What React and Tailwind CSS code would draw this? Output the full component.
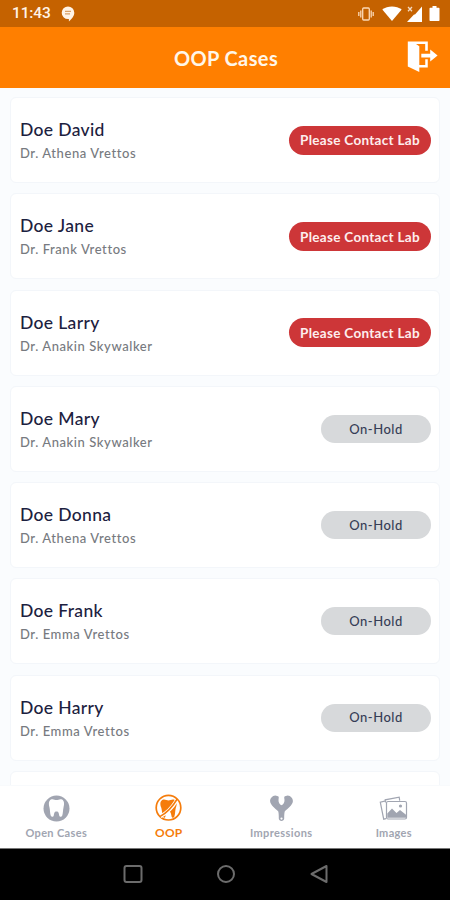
import React, { useState } from 'react'

const cases = [
    { id: 1, name: 'Doe David', doctor: 'Dr. Athena Vrettos', contact: true },
    { id: 2, name: 'Doe Jane', doctor: 'Dr. Frank Vrettos', contact: true },
    { id: 3, name: 'Doe Larry', doctor: 'Dr. Anakin Skywalker', contact: true },
    { id: 4, name: 'Doe Mary', doctor: 'Dr. Anakin Skywalker', contact: false },
    { id: 5, name: 'Doe Donna', doctor: 'Dr. Athena Vrettos', contact: false },
    { id: 6, name: 'Doe Frank', doctor: 'Dr. Emma Vrettos', contact: false },
    { id: 7, name: 'Doe Harry', doctor: 'Dr. Emma Vrettos', contact: false },
]

const tabs = [
    { label: 'Open Cases', icon: ToothIcon, text: 'text-[11px] tracking-[0.35px]' },
    { label: 'OOP', icon: OopIcon, text: 'text-[12px] tracking-[0.2px]' },
    { label: 'Impressions', icon: TrayIcon, text: 'text-[11px] tracking-[0.4px]' },
    { label: 'Images', icon: ImagesIcon, text: 'text-[11px] tracking-[0.3px]' },
]

function App() {
    const [active, setActive] = useState('OOP')

    return (
        <div className="flex h-[900px] w-[450px] flex-col overflow-hidden bg-[#fafcfe] font-['Lato',sans-serif]">
            <StatusBar />
            <header className="grid h-[61px] shrink-0 grid-cols-[1fr_auto_1fr] items-center bg-[#ff7f00] text-white">
                <span />
                <h1 className="pl-0.5 text-[20px] font-bold tracking-[0.4px] text-[#fff6e8]">OOP Cases</h1>
                <button className="mr-3 mb-0.5 justify-self-end" aria-label="Log out">
                    <LogoutIcon />
                </button>
            </header>

            <main className="flex min-h-0 flex-1 flex-col gap-[10.25px] overflow-hidden px-2.5 pt-[9px]">
                {cases.map((item) => <CaseCard key={item.id} item={item} />)}
                <div className="h-[86px] shrink-0 rounded-md border border-[#f3f6fa] bg-white" />
            </main>

            <nav className="grid h-[63px] shrink-0 grid-cols-4 border-t border-[#f8fafc] bg-white">
                {tabs.map(({ label, icon: Icon, text }) => (
                    <button
                        key={label}
                        onClick={() => setActive(label)}
                        className={`flex flex-col items-center pt-2 ${active === label ? 'text-[#f57c0b]' : 'text-[#a1a5b1]'}`}
                    >
                        <Icon />
                        <span className={`mt-1 whitespace-nowrap leading-[14px] font-bold ${text}`}>{label}</span>
                    </button>
                ))}
            </nav>

            <SystemBar />
        </div>
    )
}

export default App


function CaseCard({ item }) {
    return (
        <div className="flex h-[86px] shrink-0 items-center justify-between rounded-md border border-[#f3f6fa] bg-white pr-2 pl-[9px]">
            <div className="flex flex-col pt-[3px]">
                <span className="text-[17.5px] leading-6 font-medium tracking-[0.35px] text-[#1c2140]">{item.name}</span>
                <span className="text-[13px] leading-[23px] font-medium tracking-[0.58px] text-[#777a80]">{item.doctor}</span>
            </div>
            {
                item.contact
                    ? <span className="flex h-[29px] w-[142px] items-center justify-center rounded-full bg-[#cd3638] pt-px text-[13.5px] font-bold tracking-[0.3px] whitespace-nowrap text-[#fdeeee]">Please Contact Lab</span>
                    : <span className="flex h-7 w-[110px] items-center justify-center rounded-full bg-[#d7d9db] pt-px text-[13px] font-medium tracking-[0.5px] text-[#363d56]">On-Hold</span>
            }
        </div>
    )
}

function StatusBar() {
    return (
        <div className="flex h-[27px] shrink-0 items-center bg-[#c56200] pr-2.5 pl-3 text-[#fff3e6]">
            <span className="pt-px font-['Roboto',sans-serif] text-[15.5px] font-medium tracking-[-0.15px]">11:43</span>
            <svg className="ml-2.5" width="14" height="16" viewBox="0 0 14 16">
                <path d="M7 .5a6.3 6.3 0 0 1 6.3 6.3c0 3.2-2.6 6.5-5.4 8.7v-2.4H7A6.3 6.3 0 0 1 7 .5z" fill="currentColor" />
                <path d="M4 5.4h6M4 7.9h5" stroke="#d9a066" strokeWidth="1.2" />
            </svg>
            <svg className="ml-auto" width="16" height="14" viewBox="0 0 16 14" fill="none" stroke="#fbd9b5" strokeWidth="1.3">
                <rect x="4.7" y="1" width="6.6" height="12" rx="1" />
                <path d="M2.8 3.5v7M.8 5v4M13.2 3.5v7M15.2 5v4" />
            </svg>
            <svg className="ml-2" width="20" height="15" viewBox="0 0 20 15">
                <path d="M10 15 .3 3.6C5.6-.7 14.4-.7 19.7 3.600z" fill="#fff" />
            </svg>
            <svg className="ml-[5px]" width="15" height="16" viewBox="0 0 15 16">
                <path d="M15 .5V16H0L7 8.600h1z" fill="#fff" />
                <path d="m1 1 4 4.200M5 1 1 5.200" stroke="#f3d9c0" strokeWidth="1.3" />
            </svg>
            <svg className="ml-[7px]" width="11" height="15" viewBox="0 0 11 15">
                <path d="M3.5 0h4v1.700h2.300q.7 0 .7.700v11.800q0 .8-.7.800H1.200q-.7 0-.7-.8V2.400q0-.7.7-.7h2.300z" fill="#fff" />
            </svg>
        </div>
    )
}

function LogoutIcon() {
    return (
        <svg width="31" height="33" viewBox="0 0 31 33">
            <path d="M.8 1.500h20v9.200h-2.600V4.100H9l3.300 2.100V32L.8 26.500z" fill="#fff" />
            <path d="M12 26.200h7.500v-7" fill="none" stroke="#fff" strokeWidth="2.500" />
            <path d="M14.300 13.800h8.900V9.600l7.400 6-7.400 6v-4.200h-8.900z" fill="#fff" />
        </svg>
    )
}

function ToothIcon() {
    return (
        <svg width="27" height="28" viewBox="0 0 27 28">
            <circle cx="13.500" cy="14.600" r="13" fill="currentColor" />
            <path d="M8 5.500c2-1 3.700.5 5.500.5s3.500-1.500 5.500-.5c2.600 1.300 2.300 5 1.500 8-.6 2.400-.4 6.300-1.400 8.500-.6 1.200-2.500 1.100-2.800-.3-.4-2-.6-4.200-2.800-4.200s-2.400 2.200-2.800 4.200c-.3 1.400-2.200 1.500-2.800.3-1-2.200-.8-6.100-1.400-8.500-.8-3-1.100-6.700 1.500-8z" fill="#fff" />
        </svg>
    )
}

function OopIcon() {
    return (
        <svg width="27" height="28" viewBox="0 0 27 28">
            <circle cx="13.500" cy="13.700" r="12.300" fill="none" stroke="currentColor" strokeWidth="1.700" />
            <path d="M7.200 6.100c2.300-1.400 4.300.4 6.300.4s4-1.800 6.300-.4c2.400 1.500 2.200 4.800 1.100 7.500-.8 2-.5 7-1.700 9.300-.7 1.200-2.300 1-2.600-.5-.4-2-.9-5.300-3.100-5.300s-2.700 3.300-3.100 5.300c-.3 1.500-1.500 1.700-2.200.5-1.200-2.300-1.200-7.300-2-9.300-1.100-2.700-1.400-6 1-7.500z" fill="currentColor" />
            <path d="M5.400 22.300Q15 17.500 21.500 6.500" fill="none" stroke="#fff" strokeWidth="3.600" />
            <path d="M4.800 22.600Q14.800 17.500 22.200 5" fill="none" stroke="currentColor" strokeWidth="1.500" />
        </svg>
    )
}

function TrayIcon() {
    return (
        <svg width="25" height="28" viewBox="0 0 25 28">
            <path d="M6.300 1.600 9 2.200c1.300.6.600 2.200.5 3.700-.1 2.300 1.100 4.400 3 5.400 1.900-1 3.100-3.100 3-5.400-.1-1.500-.8-3.100.5-3.700l2.700-.6c3 .3 5.400 2.900 5.200 5.700-.3 4-5.300 7.200-8.200 10.200-.5 2.500-.5 4.700-.5 7 0 3.200-5.400 3.200-5.400 0 0-2.300 0-4.500-.5-7C6.400 14.500 1.400 11.300 1.100 7.300.9 4.500 3.300 1.900 6.300 1.600z" fill="currentColor" />
            <circle cx="12.500" cy="24.600" r="1.100" fill="#fff" />
        </svg>
    )
}

function ImagesIcon() {
    return (
        <svg width="29" height="28" viewBox="0 0 29 28" fill="none" stroke="currentColor">
            <path d="M7 24.700 4.700 25.200 1.300 8.200l5.400-1.400M6.500 8.500l-.3-2.700 14-2.600.5 3.500" strokeWidth="1.200" />
            <rect x="7.500" y="7.500" width="20" height="17.500" rx="1.500" fill="#fff" strokeWidth="1.200" />
            <path d="M8.300 23.800v-4.300l4.700-5 4.500 4.500 3.500-3 6 4.800v3z" fill="currentColor" stroke="none" />
            <circle cx="21.500" cy="12" r="1.600" fill="currentColor" stroke="none" />
        </svg>
    )
}

function SystemBar() {
    return (
        <div className="flex h-[52px] shrink-0 items-center justify-center gap-[73px] border-t border-[#777] bg-black pb-0.5 pl-0.5 text-[#6c6c6c]">
            <svg width="20" height="20" viewBox="0 0 20 20" fill="none" stroke="currentColor" strokeWidth="2">
                <rect x="1.500" y="2" width="17" height="16" rx="2" />
            </svg>
            <svg width="20" height="20" viewBox="0 0 20 20" fill="none" stroke="currentColor" strokeWidth="2">
                <circle cx="10" cy="10" r="8" />
            </svg>
            <svg width="20" height="20" viewBox="0 0 20 20" fill="none" stroke="currentColor" strokeWidth="2" strokeLinejoin="round">
                <path d="M17.500 2v16L2.500 10z" />
            </svg>
        </div>
    )
}
